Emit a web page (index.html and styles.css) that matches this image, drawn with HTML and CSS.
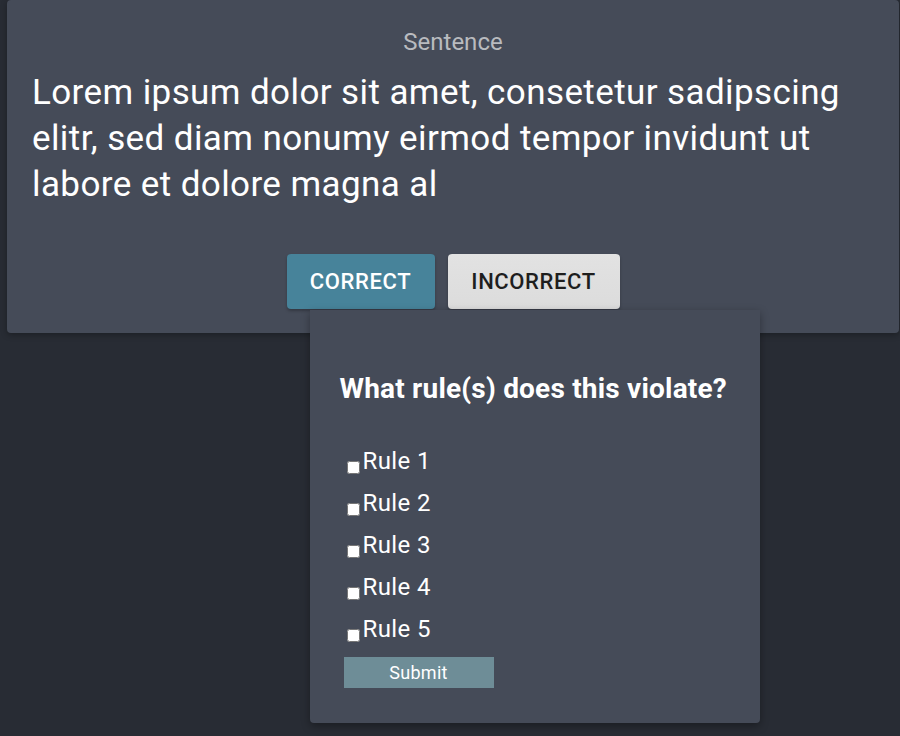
FILE: index.html
```html
<!DOCTYPE html>
<html>
<head>
<meta charset="utf-8">
<link rel="stylesheet" href="styles.css">
</head>
<body>
<div class="card">
  <div class="label">Sentence</div>
  <div class="sentence">Lorem ipsum dolor sit amet, consetetur sadipscing elitr, sed diam nonumy eirmod tempor invidunt ut labore et dolore magna al</div>
  <div class="actions">
    <button class="btn btn-correct">CORRECT</button>
    <button class="btn btn-incorrect">INCORRECT</button>
    <div class="popup">
      <div class="popup-title">What rule(s) does this violate?</div>
      <div class="rules">
        <label class="rule"><input type="checkbox">Rule 1</label>
        <label class="rule"><input type="checkbox">Rule 2</label>
        <label class="rule"><input type="checkbox">Rule 3</label>
        <label class="rule"><input type="checkbox">Rule 4</label>
        <label class="rule"><input type="checkbox">Rule 5</label>
      </div>
      <button class="submit">Submit</button>
    </div>
  </div>
</div>
</body>
</html>
```

FILE: styles.css
```css
html, body {
  margin: 0;
  padding: 0;
}
body {
  background: #282c34;
  font-family: Roboto, "Liberation Sans", sans-serif;
  width: 900px;
  height: 736px;
  overflow: hidden;
}
.card {
  margin-left: 7px;
  width: 892px;
  height: 333px;
  box-sizing: border-box;
  background: #454b58;
  border-radius: 4px;
  box-shadow: 0 2px 6px rgba(0,0,0,0.3);
  display: flex;
  flex-direction: column;
  align-items: center;
  padding-top: 28px;
}
.label {
  font-size: 24px;
  line-height: 28px;
  color: #b9bbbf;
}
.sentence {
  align-self: stretch;
  padding: 0 25px;
  margin-top: 14px;
  font-size: 35px;
  line-height: 46px;
  letter-spacing: 0.4px;
  color: #ffffff;
}
.actions {
  margin-top: 46px;
  display: flex;
  gap: 13px;
  position: relative;
}
.btn {
  height: 55px;
  border: none;
  border-radius: 4px;
  font-family: Roboto, "Liberation Sans", sans-serif;
  font-weight: 500;
  font-size: 22px;
  letter-spacing: 0.6px;
  padding: 0;
  box-shadow: 0 2px 3px rgba(0,0,0,0.25);
}
.btn-correct {
  width: 148px;
  background: #47839a;
  color: #ffffff;
}
.btn-incorrect {
  width: 172px;
  background: linear-gradient(#e2e2e2, #dcdcdc);
  color: #1e1e1e;
}
.popup {
  position: absolute;
  top: 56px;
  left: 23px;
  width: 450px;
  height: 413px;
  box-sizing: border-box;
  background: #454b58;
  border-radius: 0 0 4px 4px;
  box-shadow: 0 3px 8px rgba(0,0,0,0.35);
  padding: 63px 30px 0 30px;
  z-index: 2;
}
.popup-title {
  font-size: 28px;
  font-weight: 700;
  line-height: 32px;
  letter-spacing: 0.2px;
  color: #ffffff;
}
.rules {
  margin-top: 35px;
  display: flex;
  flex-direction: column;
  padding-left: 3px;
}
.rule {
  display: block;
  height: 42px;
  line-height: 42px;
  font-size: 24px;
  letter-spacing: 0.4px;
  color: #ffffff;
}
.rule input {
  margin: 0 3px 0 4px;
  width: 13px;
  height: 13px;
  vertical-align: -5px;
}
.submit {
  margin-top: 7px;
  margin-left: 4px;
  width: 150px;
  height: 31px;
  border: none;
  background: #6e8d97;
  color: #ffffff;
  font-family: Roboto, "Liberation Sans", sans-serif;
  font-size: 18px;
  letter-spacing: 0.3px;
  padding: 0;
}
```
